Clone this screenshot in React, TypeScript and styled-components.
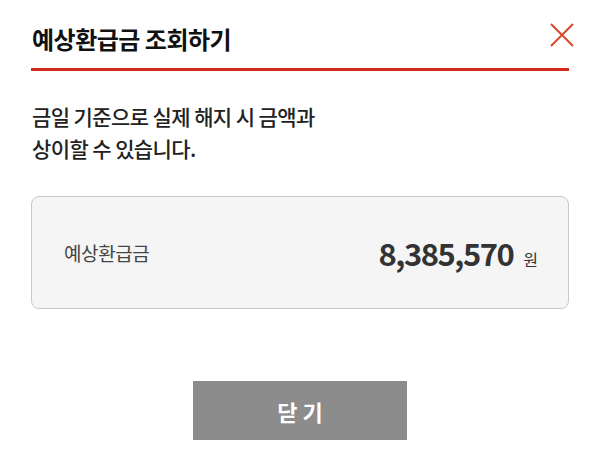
import React from "react";
import styled, { createGlobalStyle } from "styled-components";

const GlobalStyle = createGlobalStyle`
  html, body {
    margin: 0;
    padding: 0;
    background: #ffffff;
  }
  body {
    font-family: "Noto Sans CJK KR", "Noto Sans", sans-serif;
    color: #111;
  }
`;

const Page = styled.div`
  width: 600px;
  height: 453px;
  box-sizing: border-box;
  padding: 0 31px;
  display: flex;
  flex-direction: column;
`;

const Header = styled.div`
  height: 71px;
  box-sizing: border-box;
  display: flex;
  align-items: center;
  justify-content: space-between;
  padding-top: 8px;
  border-bottom: 3px solid #d42a1e;
`;

const Title = styled.h1`
  margin: 0 0 0 1px;
  font-size: 24px;
  font-weight: 700;
  letter-spacing: -0.5px;
  color: #111;
`;

const CloseButton = styled.button`
  width: 26px;
  height: 26px;
  padding: 0;
  margin: -6px -6px 0 0;
  border: none;
  background: transparent;
  display: flex;
  align-items: center;
  justify-content: center;
  cursor: pointer;
`;

const Notice = styled.p`
  margin: 29px 0 0 1px;
  font-size: 21px;
  font-weight: 500;
  line-height: 32px;
  letter-spacing: -0.6px;
  color: #222;
`;

const AmountCard = styled.div`
  margin-top: 32px;
  height: 113px;
  flex-shrink: 0;
  box-sizing: border-box;
  border: 1px solid #c9c9c9;
  border-radius: 8px;
  background: #f5f5f5;
  display: flex;
  align-items: center;
  justify-content: space-between;
  padding: 0 30px 0 32px;
`;

const Label = styled.span`
  font-size: 19px;
  letter-spacing: -0.4px;
  color: #444;
`;

const Amount = styled.div`
  display: flex;
  align-items: baseline;
  gap: 10px;
`;

const Number = styled.span`
  font-size: 31px;
  font-weight: 700;
  letter-spacing: -1.5px;
  color: #333;
`;

const Unit = styled.span`
  font-size: 16px;
  color: #333;
`;

const Footer = styled.div`
  margin-top: 72px;
  display: flex;
  justify-content: center;
`;

const CloseAction = styled.button`
  width: 214px;
  height: 59px;
  border: none;
  background: #8c8c8c;
  color: #fff;
  font-family: "Noto Sans CJK KR", "Noto Sans", sans-serif;
  font-size: 22px;
  font-weight: 700;
  cursor: pointer;
`;

export default function App() {
  return (
    <>
      <GlobalStyle />
      <Page>
        <Header>
          <Title>예상환급금 조회하기</Title>
          <CloseButton aria-label="닫기">
            <svg width="24" height="24" viewBox="0 0 24 24">
              <path d="M1 1 L23 23 M23 1 L1 23" stroke="#d8492c" strokeWidth="2" fill="none" />
            </svg>
          </CloseButton>
        </Header>
        <Notice>
          금일 기준으로 실제 해지 시 금액과
          <br />
          상이할 수 있습니다.
        </Notice>
        <AmountCard>
          <Label>예상환급금</Label>
          <Amount>
            <Number>8,385,570</Number>
            <Unit>원</Unit>
          </Amount>
        </AmountCard>
        <Footer>
          <CloseAction>닫 기</CloseAction>
        </Footer>
      </Page>
    </>
  );
}
